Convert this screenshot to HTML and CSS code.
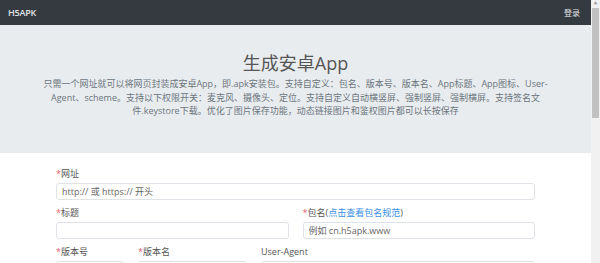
FILE: index.html
```html
<!DOCTYPE html>
<html lang="zh">
<head>
<meta charset="utf-8">
<title>H5APK</title>
<link rel="stylesheet" href="styles.css">
</head>
<body>
<div class="page">
  <nav class="navbar">
    <span class="brand">H5APK</span>
    <span class="login">登录</span>
  </nav>
  <header class="jumbotron">
    <h1 class="title">生成安卓App</h1>
    <p class="desc">只需一个网址就可以将网页封装成安卓App，即.apk安装包。支持自定义：包名、版本号、版本名、App标题、App图标、User-<br>Agent、scheme。支持以下权限开关：麦克风、摄像头、定位。支持自定义自动横竖屏、强制竖屏、强制横屏。支持签名文<br>件.keystore下载。优化了图片保存功能，动态链接图片和鉴权图片都可以长按保存</p>
  </header>
  <main class="form">
    <div class="group">
      <label class="label"><span class="req">*</span>网址</label>
      <input class="input" type="text" placeholder="http:// 或 https:// 开头">
    </div>
    <div class="row2">
      <div class="group">
        <label class="label"><span class="req">*</span>标题</label>
        <input class="input" type="text">
      </div>
      <div class="group">
        <label class="label"><span class="req">*</span>包名(<a class="link" href="#">点击查看包名规范</a>)</label>
        <input class="input" type="text" placeholder="例如 cn.h5apk.www">
      </div>
    </div>
    <div class="row3">
      <div class="group">
        <label class="label"><span class="req">*</span>版本号</label>
        <input class="input" type="text">
      </div>
      <div class="group">
        <label class="label"><span class="req">*</span>版本名</label>
        <input class="input" type="text">
      </div>
      <div class="group">
        <label class="label">User-Agent</label>
        <input class="input" type="text">
      </div>
    </div>
  </main>
</div>
<div class="scrollbar">
  <div class="arrow">▲</div>
  <div class="thumb"></div>
</div>
</body>
</html>
```

FILE: styles.css
```css
* { box-sizing: border-box; }
html, body { margin: 0; padding: 0; }
body {
  display: flex;
  width: 600px;
  height: 263px;
  overflow: hidden;
  font-family: "Open Sans", "Noto Sans CJK SC", sans-serif;
  background: #fff;
}
.page { flex: 1; min-width: 0; }
.navbar {
  height: 25px;
  background: #343a40;
  display: flex;
  align-items: center;
  justify-content: space-between;
  padding: 0 11px 0 8px;
  color: #e3e5e8;
  font-size: 9px;
}
.brand { font-weight: 600; letter-spacing: -0.2px; }
.login { font-size: 8px; }
.jumbotron {
  height: 128px;
  background: #e9ecef;
  padding-top: 27px;
  text-align: center;
}
.title {
  margin: 0;
  font-size: 18px;
  line-height: 22px;
  font-weight: 400;
  color: #555;
}
.desc {
  margin: 3px 0 0;
  font-size: 9px;
  line-height: 13.7px;
  color: #6c757d;
  white-space: nowrap;
}
.form {
  width: 479px;
  margin: 0 auto;
  padding-top: 14px;
}
.group { margin-bottom: 6px; }
.label {
  display: block;
  font-size: 9px;
  line-height: 13px;
  color: #555;
  margin-bottom: 3px;
}
.req { color: #e4606d; }
.link { color: #3a8ee6; text-decoration: none; }
.input {
  display: block;
  width: 100%;
  height: 17px;
  border: 1px solid #dfe2e6;
  border-radius: 3px;
  padding: 0 5px;
  font-family: inherit;
  font-size: 9px;
  color: #555;
  background: #fff;
  outline: none;
}
.input::placeholder { color: #666; }
.row2 {
  display: grid;
  grid-template-columns: 1fr 1fr;
  column-gap: 14px;
}
.row3 {
  display: grid;
  grid-template-columns: 68px 109px 1fr;
  column-gap: 14px;
}
.scrollbar {
  width: 9px;
  flex: none;
  background: #f1f1f1;
  display: flex;
  flex-direction: column;
  align-items: center;
}
.arrow {
  height: 8px;
  font-size: 4px;
  line-height: 8px;
  color: #a3a3a3;
}
.thumb {
  width: 7px;
  height: 110px;
  background: #c1c1c1;
}
```
